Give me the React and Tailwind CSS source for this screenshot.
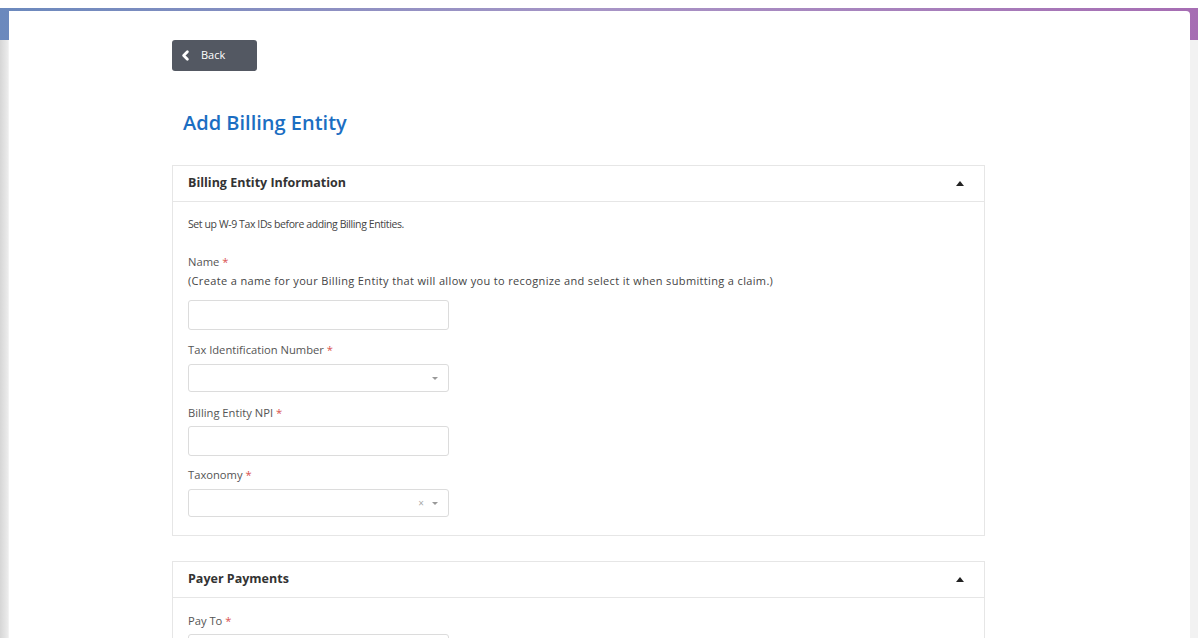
import { ChevronLeft } from 'lucide-react';

const font = { fontFamily: '"Open Sans", "Noto Sans", sans-serif' };

const Label = ({ children }) => (
  <div className="text-[11.2px] text-[#555] leading-[14px]">
    {children} <span className="text-[#d9534f]">*</span>
  </div>
);

const TextInput = () => (
  <div className="w-[261px] h-[30px] border border-[#dcdcdc] rounded-[3px] bg-white" />
);

const SelectInput = ({ clearable }) => (
  <div className="w-[261px] h-[28px] border border-[#dcdcdc] rounded-[3px] bg-white flex items-center justify-end pr-[10px] gap-[8px]">
    {clearable && <span className="text-[10px] text-[#aaa] leading-none">×</span>}
    <span className="w-0 h-0 border-l-[3px] border-r-[3px] border-t-[3px] border-l-transparent border-r-transparent border-t-[#999]" />
  </div>
);

const Section = ({ title, children }) => (
  <div className="w-[813px] border border-[#e6e6e6] bg-white">
    <div className="h-[36px] border-b border-[#e6e6e6] flex items-center justify-between pl-[15px] pr-[20px]">
      <span className="text-[12.5px] font-bold text-[#333]">{title}</span>
      <span className="w-0 h-0 border-l-[4px] border-r-[4px] border-b-[5px] border-l-transparent border-r-transparent border-b-[#222]" />
    </div>
    <div className="px-[15px]">{children}</div>
  </div>
);

export default function App() {
  return (
    <div className="relative w-[1198px] h-[638px] overflow-hidden bg-[#f2f2f2]" style={font}>
      {/* header strip behind the panel */}
      <div className="absolute left-0 top-0 w-full h-[8px] bg-white" />
      <div className="absolute left-0 top-[8px] w-full h-[32px] bg-gradient-to-r from-[#6b89bd] via-[#a795c6] to-[#a66db3]" />
      <div className="absolute left-0 top-[40px] w-[8px] h-full bg-gradient-to-r from-[#d6d6d6] to-[#ececec]" />

      <div className="absolute left-[9px] top-[11px] w-[1181px] h-[640px] bg-white rounded-tr-[4px] pl-[163px] pt-[29px]">
        <button className="w-[85px] h-[31px] bg-[#535862] rounded-[3px] flex items-center pl-[6px] gap-[8px] text-white">
          <ChevronLeft size={15} strokeWidth={4.5} />
          <span className="text-[11px]">Back</span>
        </button>

        <h1 className="mt-[38px] ml-[11px] text-[20px] font-semibold text-[#1b6ec2] leading-[28px]">
          Add Billing Entity
        </h1>

        <div className="mt-[28px]">
          <Section title="Billing Entity Information">
            <div className="pt-[15px] pb-[18px]">
              <div className="text-[10.5px] tracking-[-0.4px] text-[#444] leading-[14px]">
                Set up W-9 Tax IDs before adding Billing Entities.
              </div>
              <div className="mt-[24px]">
                <Label>Name</Label>
                <div className="mt-[5px] text-[11px] tracking-[0.35px] text-[#444] leading-[14px]">
                  (Create a name for your Billing Entity that will allow you to recognize and select it when submitting a claim.)
                </div>
                <div className="mt-[12px]"><TextInput /></div>
              </div>
              <div className="mt-[13px]">
                <Label>Tax Identification Number</Label>
                <div className="mt-[7px]"><SelectInput /></div>
              </div>
              <div className="mt-[14px]">
                <Label>Billing Entity NPI</Label>
                <div className="mt-[6px]"><TextInput /></div>
              </div>
              <div className="mt-[12px]">
                <Label>Taxonomy</Label>
                <div className="mt-[7px]"><SelectInput clearable /></div>
              </div>
            </div>
          </Section>
        </div>

        <div className="mt-[25px]">
          <Section title="Payer Payments">
            <div className="pt-[16px]">
              <Label>Pay To</Label>
              <div className="mt-[6px]"><TextInput /></div>
            </div>
          </Section>
        </div>
      </div>
    </div>
  );
}
